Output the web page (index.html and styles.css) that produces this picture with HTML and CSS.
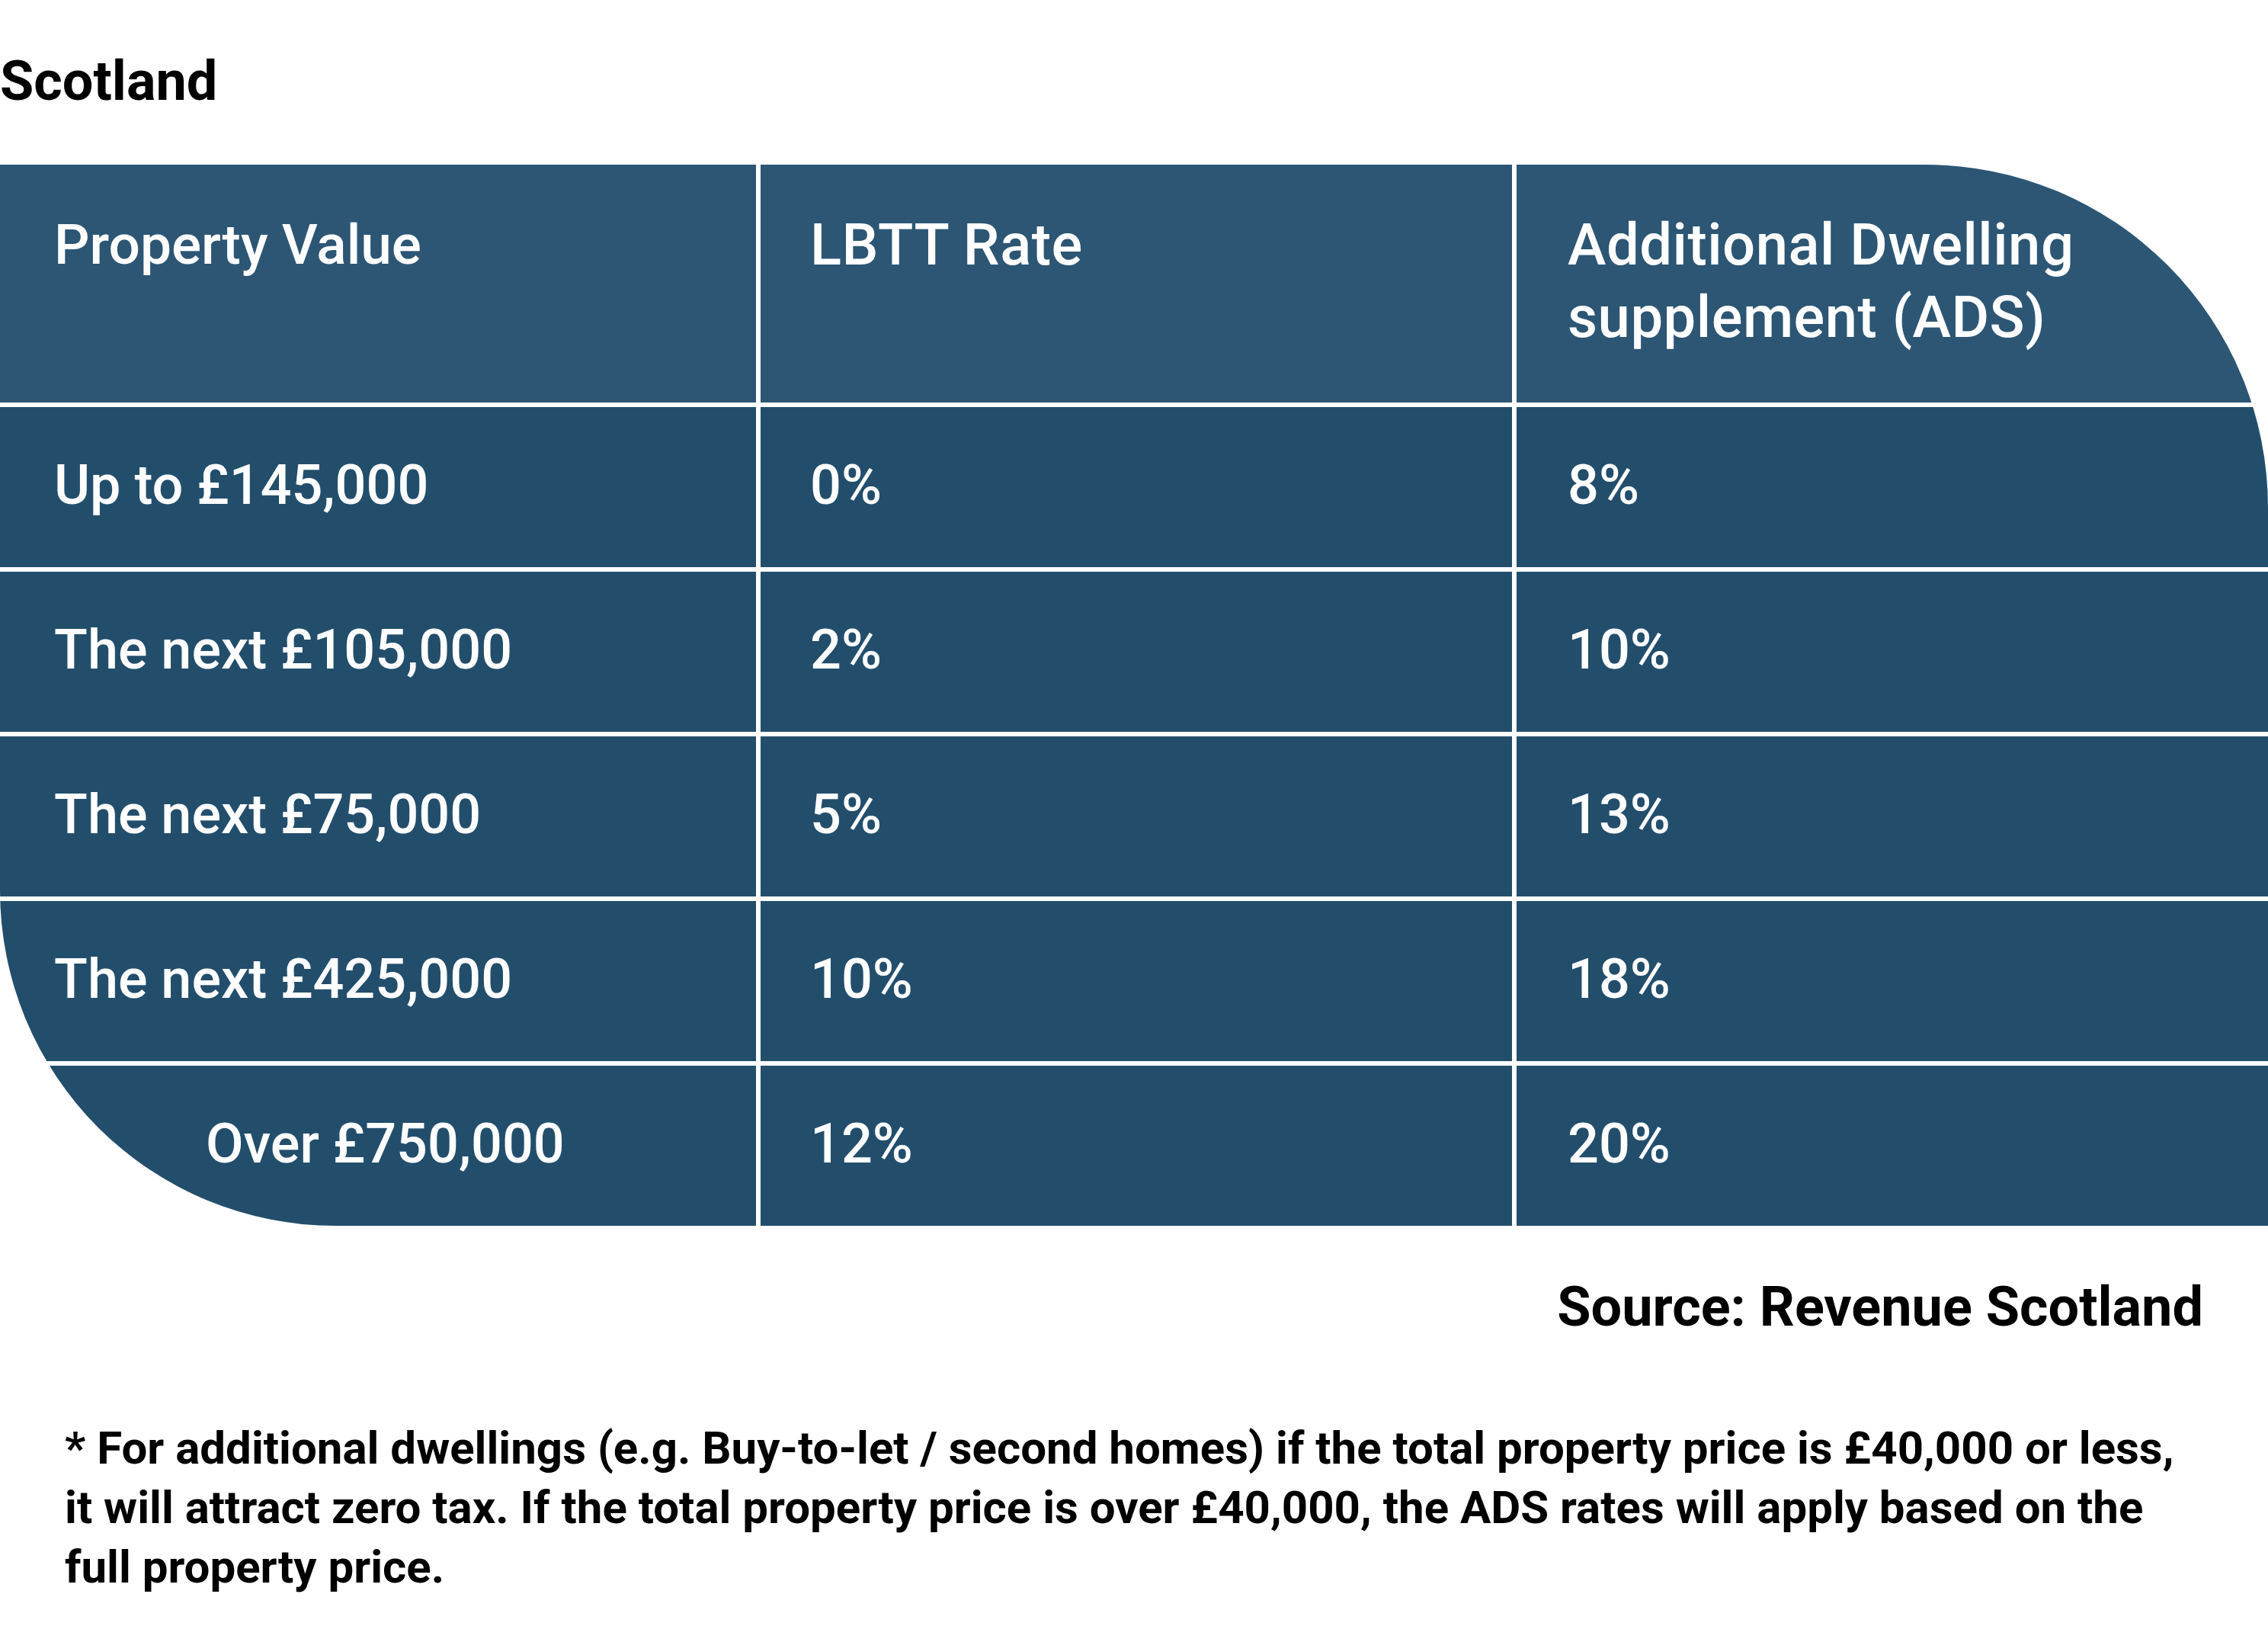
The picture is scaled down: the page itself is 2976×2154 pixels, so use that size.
FILE: index.html
```html
<!DOCTYPE html>
<html lang="en">
<head>
<meta charset="utf-8">
<title>Scotland LBTT rates</title>
<link rel="stylesheet" href="styles.css">
</head>
<body>
  <h1 class="title">Scotland</h1>
  <div class="rates">
    <div class="cell head first">Property Value</div>
    <div class="cell head wide">LBTT Rate</div>
    <div class="cell head wide third">Additional Dwelling supplement (ADS)</div>

    <div class="cell first">Up to £145,000</div>
    <div class="cell">0%</div>
    <div class="cell third">8%</div>

    <div class="cell first">The next £105,000</div>
    <div class="cell">2%</div>
    <div class="cell third">10%</div>

    <div class="cell first">The next £75,000</div>
    <div class="cell">5%</div>
    <div class="cell third">13%</div>

    <div class="cell first">The next £425,000</div>
    <div class="cell">10%</div>
    <div class="cell third">18%</div>

    <div class="cell first last">Over £750,000</div>
    <div class="cell">12%</div>
    <div class="cell third">20%</div>
  </div>
  <p class="source">Source: Revenue Scotland</p>
  <p class="note">* For additional dwellings (e.g. Buy-to-let / second homes) if the total property price is £40,000 or less, it will attract zero tax. If the total property price is over £40,000, the ADS rates will apply based on the full property price.</p>
</body>
</html>
```

FILE: styles.css
```css
html, body {
  margin: 0;
  padding: 0;
  background: #ffffff;
}

body {
  font-family: Roboto, "Liberation Sans", Arial, sans-serif;
  color: #000000;
}

.title {
  margin: 65px 0 0 0;
  font-size: 72px;
  line-height: 84px;
  font-weight: 700;
  height: 151px;
}

.rates {
  display: grid;
  grid-template-columns: 992px 986px 986px;
  grid-template-rows: 312px repeat(5, 210px);
  gap: 6px;
  border-radius: 0 450px 0 440px;
  overflow: hidden;
}

.cell {
  background: #224e6c;
  color: #ffffff;
  font-size: 72px;
  font-weight: 500;
  line-height: 95px;
  padding: 0 40px 6px 65px;
  display: flex;
  align-items: center;
}

.cell.third {
  padding-left: 67px;
}

.cell.first {
  padding-left: 71px;
}

.cell.last {
  padding-left: 270px;
}

.cell.head {
  background: #2c5674;
  align-items: flex-start;
  padding-top: 59px;
  padding-bottom: 0;
}

.cell.head.first {
  font-size: 73px;
  padding-top: 58px;
}

.cell.head.wide {
  font-size: 76px;
  letter-spacing: 0.5px;
  padding-top: 58px;
}

.source {
  margin: 65px 0 0 0;
  font-size: 72px;
  line-height: 84px;
  font-weight: 700;
  text-align: right;
  padding-right: 85px;
}

.note {
  margin: 104px 0 0 0;
  padding: 0 0 0 85px;
  width: 2800px;
  font-size: 60px;
  line-height: 78px;
  font-weight: 700;
}
```
